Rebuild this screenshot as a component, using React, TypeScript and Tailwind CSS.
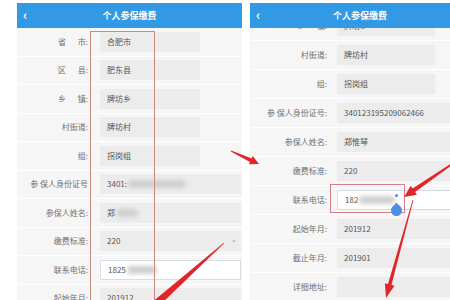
import type { ReactNode } from 'react';

type Row = { label: ReactNode; value?: ReactNode; wide?: boolean; white?: boolean; select?: boolean };

const Blur = ({ w }: { w: number }) => (
  <span className="inline-block h-[8px] rounded-full bg-[#cfcfcf] blur-[2px] ml-[1px]" style={{ width: w }} />
);

const spaced = (a: string, b: string) => (
  <span className="flex w-[30px] justify-between">
    <span>{a}</span>
    <span>{b}:</span>
  </span>
);

const leftRows: Row[] = [
  { label: spaced('省', '市'), value: '合肥市' },
  { label: spaced('区', '县'), value: '肥东县' },
  { label: spaced('乡', '镇'), value: '牌坊乡' },
  { label: '村街道:', value: '牌坊村' },
  { label: '组:', value: '拐岗组' },
  { label: '参 保人身份证号', value: <>3401:<Blur w={58} /></>, wide: true },
  { label: '参保人姓名:', value: <>郑<Blur w={22} /></>, wide: true },
  { label: '缴费标准:', value: '220', wide: true, select: true },
  { label: '联系电话:', value: <>1825<Blur w={30} /></>, wide: true, white: true },
  { label: '起始年月:', value: '201912', wide: true },
];

const rightRows: Row[] = [
  { label: spaced('乡', '镇'), value: '牌坊乡' },
  { label: '村街道:', value: '牌坊村' },
  { label: '组:', value: '拐岗组' },
  { label: '参 保人身份证号:', value: '340123195209062466', wide: true },
  { label: '参保人姓名:', value: '郑惟琴', wide: true },
  { label: '缴费标准:', value: '220', wide: true },
  { label: '联系电话:', value: <>182<Blur w={36} /></>, wide: true, white: true },
  { label: '起始年月:', value: '201912', wide: true },
  { label: '截止年月:', value: '201901', wide: true },
  { label: '详细地址:', value: '', wide: true },
];

function Header() {
  return (
    <div className="relative mt-[3px] flex h-[25px] shrink-0 items-center justify-center bg-[#3299e4] text-[9px] font-bold text-white">
      <span className="absolute left-[6px] top-[3px] text-[13px] font-bold leading-[18px]">‹</span>
      个人参保缴费
    </div>
  );
}

function FormRow({ row, labelW, gap, narrowW, h }: { row: Row; labelW: number; gap: number; narrowW: number; h: string }) {
  return (
    <div className={`flex shrink-0 items-center border-b border-white bg-[#f6f6f6] ${h}`}>
      <div className="flex shrink-0 justify-end text-[8px] text-[#707070]" style={{ width: labelW }}>
        {row.label}
      </div>
      <div
        className={`relative flex h-[20px] items-center px-[7px] text-[8px] text-[#555] ${
          row.white ? 'border border-[#d6dde4] bg-white' : 'bg-[#ececec]'
        } ${row.wide ? 'flex-1 mr-[1px]' : ''}`}
        style={{ marginLeft: gap, width: row.wide ? undefined : narrowW }}
      >
        {row.value}
        {row.select && <span className="absolute right-[4px] top-[3px] text-[7px] text-[#888]">⌄</span>}
      </div>
    </div>
  );
}

function arrow(tx: number, ty: number, hx: number, hy: number, w0: number, w1: number, hl: number, hw: number) {
  const len = Math.hypot(hx - tx, hy - ty);
  const dx = (hx - tx) / len;
  const dy = (hy - ty) / len;
  const nx = -dy;
  const ny = dx;
  const bx = hx - dx * hl;
  const by = hy - dy * hl;
  const p = [
    [tx + nx * w0, ty + ny * w0],
    [bx + nx * w1, by + ny * w1],
    [bx + nx * hw, by + ny * hw],
    [hx, hy],
    [bx - nx * hw, by - ny * hw],
    [bx - nx * w1, by - ny * w1],
    [tx - nx * w0, ty - ny * w0],
  ];
  return p.map(([x, y]) => `${x.toFixed(1)},${y.toFixed(1)}`).join(' ');
}

export default function App() {
  return (
    <div
      className="relative flex h-[300px] w-[450px] overflow-hidden bg-white"
      style={{ fontFamily: '"Noto Sans CJK SC", "Noto Sans", sans-serif' }}
    >
      {/* left phone */}
      <div className="ml-[17px] flex w-[225px] shrink-0 flex-col">
        <Header />
        {leftRows.map((r, i) => (
          <FormRow key={i} row={r} labelW={71} gap={12} narrowW={100} h="h-[28.5px]" />
        ))}
      </div>

      {/* right phone */}
      <div className="ml-[8px] flex w-[220px] shrink-0 flex-col">
        <div className="relative z-10 flex flex-col">
          <Header />
        </div>
        <div className="flex-1 overflow-hidden">
          <div className="-mt-[16.5px] flex flex-col">
            {rightRows.map((r, i) => (
              <FormRow key={i} row={r} labelW={77} gap={10} narrowW={98} h="h-[29px]" />
            ))}
          </div>
        </div>
      </div>

      {/* annotations */}
      <div className="pointer-events-none absolute left-[90px] top-[31px] h-[290px] w-[65px] border border-[#c98a80]" />
      <div className="pointer-events-none absolute left-[330px] top-[184px] h-[29px] w-[75px] border border-[#d77d86]" />
      <div className="pointer-events-none absolute left-[395px] top-[194px] h-[3px] w-[3px] rounded-full bg-[#4a90e2]" />
      <div className="pointer-events-none absolute left-[391px] top-[205px] h-[11px] w-[11px] rounded-full rounded-tr-none rotate-[-45deg] bg-[#4a8fe0]" />
      <svg className="pointer-events-none absolute left-0 top-0" width="450" height="300">
        <polygon points={arrow(224, 243, 140, 318, 0.3, 4, 14, 8)} fill="#e0262b" />
        <polygon points={arrow(231, 151, 259, 164, 0.4, 2, 9, 4.5)} fill="#e0262b" />
        <polygon points={arrow(452, 164, 404, 197, 0.8, 2.2, 12, 5.5)} fill="#e0262b" />
        <polygon points={arrow(413, 200, 386, 298, 0.4, 1.8, 14, 5)} fill="#e0262b" />
      </svg>
    </div>
  );
}
